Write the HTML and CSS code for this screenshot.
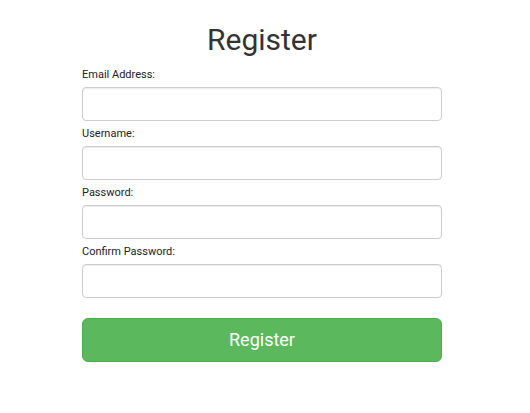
FILE: index.html
```html
<!DOCTYPE html>
<html>
<head>
<meta charset="utf-8">
<link rel="stylesheet" href="styles.css">
</head>
<body>
<div class="wrap">
  <h1 class="title">Register</h1>
  <form class="form">
    <div class="group">
      <label class="label">Email Address:</label>
      <input class="input" type="text">
    </div>
    <div class="group">
      <label class="label">Username:</label>
      <input class="input" type="text">
    </div>
    <div class="group">
      <label class="label">Password:</label>
      <input class="input" type="password">
    </div>
    <div class="group">
      <label class="label">Confirm Password:</label>
      <input class="input" type="password">
    </div>
    <button class="btn" type="button">Register</button>
  </form>
</div>
</body>
</html>
```
FILE: styles.css
```css
html, body {
  margin: 0;
  padding: 0;
  background: #fff;
  font-family: Roboto, "Liberation Sans", sans-serif;
  color: #333;
}
.wrap {
  width: 360px;
  margin-left: 82px;
  padding-top: 23px;
}
.title {
  margin: 0 0 9px;
  font-size: 30px;
  line-height: 34px;
  font-weight: 400;
  text-align: center;
  color: #333;
}
.form {
  display: flex;
  flex-direction: column;
}
.group {
  display: flex;
  flex-direction: column;
  margin-bottom: 4px;
}
.label {
  font-size: 11px;
  line-height: 17px;
  color: #222;
  margin-bottom: 4px;
}
.input {
  box-sizing: border-box;
  height: 34px;
  width: 360px;
  margin: 0;
  border: 1px solid #ccc;
  border-radius: 4px;
  background: #fff;
  box-shadow: inset 0 1px 1px rgba(0,0,0,0.075);
  outline: none;
}
.btn {
  margin-top: 16px;
  height: 44px;
  width: 360px;
  border: 1px solid #4cae4c;
  border-radius: 6px;
  background: #5cb85c;
  color: #fff;
  font-family: Roboto, "Liberation Sans", sans-serif;
  font-size: 18px;
  line-height: 1;
  padding: 0;
}
```
